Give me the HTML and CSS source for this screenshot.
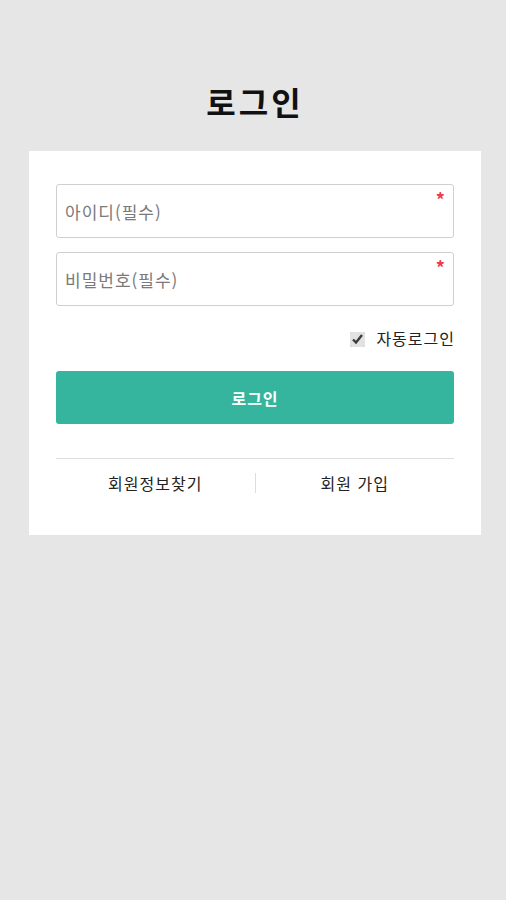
FILE: index.html
```html
<!DOCTYPE html>
<html lang="ko">
<head>
    <meta charset="UTF-8">
    <meta name="viewport" content="width=device-width, initial-scale=1.0">
    <title>로그인</title>
    <link rel="stylesheet" href="styles.css">
</head>
<body>
    <div class="login-wrap">
        <h1 class="login-title">로그인</h1>
        <div class="login-box">
            <form class="login-form">
                <div class="field">
                    <input type="text" placeholder="아이디(필수)">
                    <span class="required">*</span>
                </div>
                <div class="field">
                    <input type="password" placeholder="비밀번호(필수)">
                    <span class="required">*</span>
                </div>
                <div class="auto-login">
                    <label><input type="checkbox" checked> 자동로그인</label>
                </div>
                <button type="submit" class="btn-login">로그인</button>
            </form>
            <div class="login-links">
                <a href="#">회원정보찾기</a>
                <span class="bar"></span>
                <a href="#">회원 가입</a>
            </div>
        </div>
    </div>
</body>
</html>
```

FILE: styles.css
```css
body {
    margin: 0;
    background: #e6e6e6;
    font-family: "Noto Sans CJK KR", "Noto Sans", sans-serif;
    color: #222;
    letter-spacing: 1px;
}
.login-wrap {
    padding: 76px 25px 0 29px;
}
.login-title {
    margin: 0 0 25px;
    text-align: center;
    font-size: 32px;
    font-weight: bold;
    line-height: 50px;
    letter-spacing: 3px;
    color: #111;
}
.login-box {
    background: white;
    padding: 33px 27px 40px;
}
.field {
    position: relative;
    margin-bottom: 14px;
}
.field input {
    display: block;
    width: 100%;
    box-sizing: border-box;
    height: 54px;
    padding: 0 8px;
    border: 1px solid #cfcfcf;
    border-radius: 3px;
    font-family: inherit;
    font-size: 17px;
    letter-spacing: 1px;
    color: #333;
}
.field input::placeholder {
    color: #7a7a7a;
}
.required {
    position: absolute;
    top: 2px;
    right: 8px;
    color: #ee3b4b;
    font-size: 18px;
    font-weight: bold;
}
.auto-login {
    text-align: right;
    margin: 20px -1px 21px 0;
    font-size: 16px;
    line-height: 24px;
}
.auto-login input {
    margin: 0 6px 0 0;
    width: 15px;
    height: 15px;
    vertical-align: -2px;
    accent-color: #e2e2e2;
}
.btn-login {
    display: block;
    width: 100%;
    height: 53px;
    border: none;
    border-radius: 3px;
    background: #35b59d;
    color: white;
    font-family: inherit;
    font-size: 16px;
    font-weight: bold;
    letter-spacing: 1px;
    cursor: pointer;
}
.login-links {
    display: flex;
    align-items: center;
    margin-top: 34px;
    padding-top: 12px;
    border-top: 1px solid #ddd;
}
.login-links a {
    flex: 1;
    text-align: center;
    color: #222;
    text-decoration: none;
    font-size: 16px;
    line-height: 24px;
}
.login-links .bar {
    width: 1px;
    height: 20px;
    background: #ddd;
}
```
